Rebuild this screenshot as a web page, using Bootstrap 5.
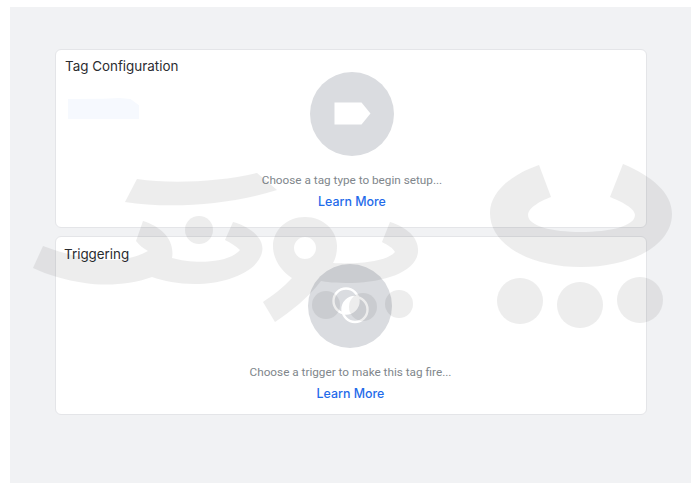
<!DOCTYPE html>
<html lang="en">

<head>
    <meta charset="UTF-8">
    <meta name="viewport" content="width=device-width, initial-scale=1.0">
    <title>Tag Configuration</title>
    <link href="https://cdn.jsdelivr.net/npm/bootstrap@5.3.0/dist/css/bootstrap.min.css" rel="stylesheet">
    <style>
        body {
            background: #fff;
            padding: 7px 9px 7px 10px;
            font-family: "Roboto", "Liberation Sans", sans-serif;
        }

        .page-panel {
            height: 476px;
            background: #f1f2f4;
            padding: 42px 44px 0 45px;
        }

        /* Cards */
        .setup-card {
            height: 179px;
            border: 1px solid #e4e5e8;
            border-radius: 6px;
            margin-bottom: 8px;
        }

        .setup-title {
            font-family: "Inter", "Liberation Sans", sans-serif;
            font-size: 13.4px;
            line-height: 20px;
            font-weight: 400;
            color: #2b2c30;
            margin: 0;
            padding: 6px 0 0 9px;
        }

        .title-trigger {
            padding: 7px 0 0 8px;
        }

        .icon-disc {
            width: 84px;
            height: 84px;
            border-radius: 50%;
            background: #dadce0;
            margin-top: -4px;
        }

        .disc-trigger {
            margin-top: 0;
            margin-right: 2px;
        }

        .setup-stack {
            padding-left: 2px;
        }

        .stack-trigger {
            padding-left: 0;
            padding-right: 1px;
        }

        .setup-hint {
            font-size: 11.75px;
            line-height: 16px;
            color: #80868b;
            margin: 16px 0 0;
        }

        .setup-link {
            font-family: "Inter", "Liberation Sans", sans-serif;
            font-size: 12.4px;
            font-weight: 500;
            line-height: 18px;
            color: #1f6bea;
            text-decoration: none;
            margin-top: 5px;
        }

        /* pale leftover patch in the first card */
        .pale-patch {
            position: absolute;
            left: 12px;
            top: 48px;
            width: 71px;
            height: 21px;
            background: #f6f9fe;
            clip-path: polygon(0 5%, 50% 3%, 72% 0, 88% 5%, 100% 35%, 100% 100%, 0 100%);
        }

        /* logo watermark lying over the whole page */
        .logo-watermark {
            position: absolute;
            left: 0;
            top: 0;
            opacity: .065;
            pointer-events: none;
        }
    </style>
</head>

<body>

    <main class="page-panel">

        <div class="card setup-card position-relative">
            <h2 class="setup-title">Tag Configuration</h2>
            <div class="pale-patch"></div>
            <div class="setup-stack d-flex flex-column align-items-center">
                <div class="icon-disc d-flex align-items-center justify-content-center">
                    <svg width="84" height="84" viewBox="0 0 84 84">
                        <path d="M24.500 30.500H51.500L60.500 41.500L51.500 52.500H24.500Z" fill="#fff" />
                    </svg>
                </div>
                <p class="setup-hint">Choose a tag type to begin setup...</p>
                <a class="setup-link" href="#">Learn More</a>
            </div>
        </div>

        <div class="card setup-card position-relative">
            <h2 class="setup-title title-trigger">Triggering</h2>
            <div class="setup-stack stack-trigger d-flex flex-column align-items-center">
                <div class="icon-disc disc-trigger d-flex align-items-center justify-content-center">
                    <svg width="84" height="84" viewBox="0 0 84 84">
                        <defs>
                            <clipPath id="ringClip">
                                <circle cx="38" cy="37" r="12.500" />
                            </clipPath>
                        </defs>
                        <circle cx="47" cy="45.500" r="12.500" fill="#fff" clip-path="url(#ringClip)" />
                        <circle cx="38" cy="37" r="12.500" fill="none" stroke="#fff" stroke-width="2.400" />
                        <circle cx="47" cy="45.500" r="12.500" fill="none" stroke="#fff" stroke-width="2.400" />
                    </svg>
                </div>
                <p class="setup-hint">Choose a trigger to make this tag fire...</p>
                <a class="setup-link" href="#">Learn More</a>
            </div>
        </div>

    </main>

    <svg class="logo-watermark" width="700" height="490" viewBox="0 0 700 490" fill="#000">
        <!-- left strokes -->
        <path d="M137 179C170 184 220 182 257 173L277 190C230 205 170 209 125 202Z" />
        <circle cx="199" cy="230" r="14" />
        <path d="M43 246C75 258 118 268 148 251C143 248 139 245 136 241L143 221C162 227 175 240 172 258C192 264 228 264 240 250C236 246 231 243 225 240L233 222C252 227 265 240 262 252C258 272 225 284 195 284C178 284 164 281 152 277C130 285 105 286 85 283C65 280 48 275 33 268Z" />
        <!-- middle loop -->
        <path fill-rule="evenodd" d="M305 217C323 217 337 230 337 246C337 254 335 260 333 263C345 264 385 264 395 252C393 248 388 245 382 242L390 222C408 228 419 238 418 252C416 272 385 282 352 283C335 283 325 282 321 281C308 298 290 312 275 322L263 302C272 296 284 287 292 278C281 271 273 259 273 246C273 230 287 217 305 217ZM305 237A11 11 0 1 0 305 259A11 11 0 1 0 305 237Z" />
        <circle cx="326" cy="305" r="14" />
        <circle cx="363" cy="307" r="14" />
        <circle cx="399" cy="304" r="14" />
        <!-- right bowl -->
        <path d="M539 165L551 197C540 201 528 208 528 215C528 226 552 232 581 232C610 232 635 226 635 215C635 208 620 201 610 197L623 164C652 176 672 193 672 214C672 245 632 267 581 267C530 267 490 245 490 213C490 193 510 175 539 165Z" />
        <circle cx="520" cy="301" r="23" />
        <circle cx="580" cy="305" r="23" />
        <circle cx="640" cy="300" r="23" />
    </svg>

    <script src="https://cdn.jsdelivr.net/npm/bootstrap@5.3.0/dist/js/bootstrap.bundle.min.js"></script>
</body>

</html>
